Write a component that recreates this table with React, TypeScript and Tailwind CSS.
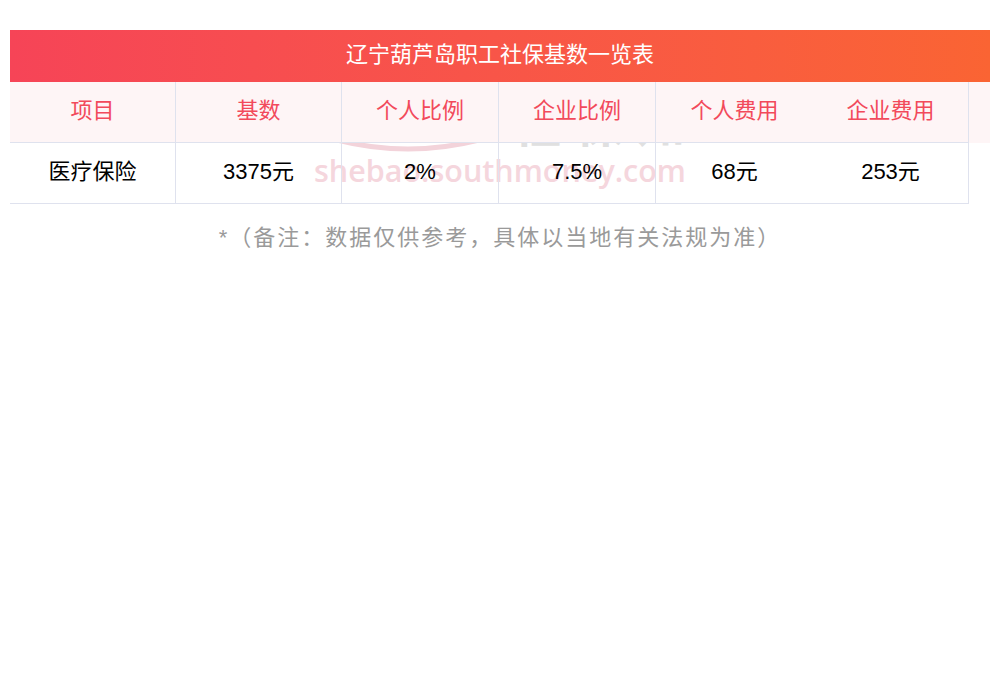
import React from "react";

const cols = [
  { head: "项目", value: "医疗保险", w: "w-[166px]", border: true },
  { head: "基数", value: "3375元", w: "w-[166px]", border: true },
  { head: "个人比例", value: "2%", w: "w-[157px]", border: true },
  { head: "企业比例", value: "7.5%", w: "w-[157px]", border: true },
  { head: "个人费用", value: "68元", w: "w-[157px]", border: false },
  { head: "企业费用", value: "253元", w: "w-[156px]", border: true },
];

const font = "font-['Liberation_Sans','Noto_Sans_CJK_SC',sans-serif]";

// faint site watermark sitting behind the table
const Watermark = () => (
  <div className="absolute left-[303px] top-[56px] w-[400px] h-[70px] select-none pointer-events-none">
    <svg className="absolute left-[20px] top-0" width="150" height="16" viewBox="0 0 150 16">
      <path d="M4 2 Q 75 20 146 2" stroke="#f3d3da" strokeWidth="5" fill="none" strokeLinecap="round" />
    </svg>
    <div className="absolute left-[200px] top-[-41px] text-[48px] leading-none font-bold tracking-[14px] text-[#e0e0e0] font-['Noto_Sans_CJK_SC',sans-serif]">
      社保知
    </div>
    <div className="absolute left-[1px] top-[17px] text-[30.5px] leading-none font-semibold text-[#f5d6dd] font-['Open_Sans','Liberation_Sans',sans-serif] whitespace-nowrap">
      shebao.southmoney.com
    </div>
  </div>
);

export default function App() {
  return (
    <div className={`w-[1000px] h-[673px] bg-white px-[10px] pt-[30px] ${font}`}>
      <div className="h-[52px] w-full pb-[3px] flex items-center justify-center bg-gradient-to-r from-[#f64457] to-[#fa6433] text-white text-[22px]">
        辽宁葫芦岛职工社保基数一览表
      </div>
      <div className="relative">
        <Watermark />
        <div className="relative bg-[#fef5f6] w-full">
          <div className="flex w-[959px]">
            {cols.map((c) => (
              <div
                key={c.head}
                className={`${c.w} h-[61px] pb-[4px] flex items-center justify-center border-b border-[#dfe2ee] text-[22px] text-[#f24a5b] ${c.border ? "border-r" : ""}`}
              >
                {c.head}
              </div>
            ))}
          </div>
        </div>
        <div className="relative flex w-[959px]">
          {cols.map((c) => (
            <div
              key={c.head}
              className={`${c.w} h-[61px] pb-[4px] flex items-center justify-center border-b border-[#dfe2ee] text-[22px] text-black ${c.border ? "border-r" : ""}`}
            >
              {c.value}
            </div>
          ))}
        </div>
      </div>
      <div className="mt-[21px] text-center text-[22px] text-[#9a9a9a] leading-[26px] tracking-[2px]">
        *（备注：数据仅供参考，具体以当地有关法规为准）
      </div>
    </div>
  );
}
